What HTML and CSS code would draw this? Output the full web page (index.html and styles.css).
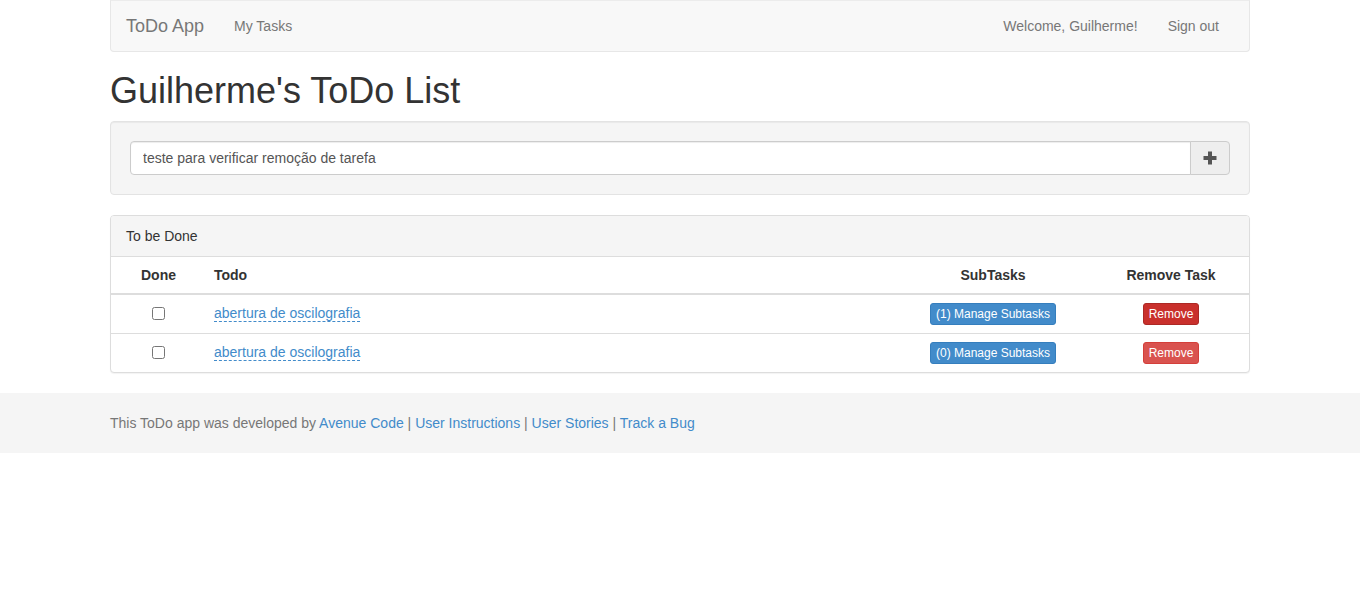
FILE: index.html
```html
<!DOCTYPE html>
<html lang="en">
<head>
<meta charset="utf-8">
<title>ToDo App</title>
<link rel="stylesheet" href="styles.css">
</head>
<body>
<div class="container">
  <nav class="navbar">
    <div class="nav-left">
      <a class="brand" href="#">ToDo App</a>
      <a class="nav-link" href="#">My Tasks</a>
    </div>
    <div class="nav-right">
      <a class="nav-link" href="#">Welcome, Guilherme!</a>
      <a class="nav-link" href="#">Sign out</a>
    </div>
  </nav>

  <h1 class="title">Guilherme's ToDo List</h1>

  <div class="well">
    <div class="input-group">
      <input class="task-input" type="text" value="teste para verificar remoção de tarefa">
      <button class="add-btn" type="button">
        <svg width="14" height="14" viewBox="0 0 14 14"><rect x="5" y="0.5" width="4" height="13" fill="#555"/><rect x="0.5" y="5" width="13" height="4" fill="#555"/></svg>
      </button>
    </div>
  </div>

  <div class="panel">
    <div class="panel-heading">To be Done</div>
    <table class="table">
      <thead>
        <tr>
          <th class="c-done">Done</th>
          <th class="c-todo">Todo</th>
          <th class="c-sub">SubTasks</th>
          <th class="c-rem">Remove Task</th>
        </tr>
      </thead>
      <tbody>
        <tr>
          <td class="c-done"><input type="checkbox" class="chk"></td>
          <td class="c-todo"><a class="editable" href="#">abertura de oscilografia</a></td>
          <td class="c-sub"><button class="btn btn-primary">(1) Manage Subtasks</button></td>
          <td class="c-rem"><button class="btn btn-danger active">Remove</button></td>
        </tr>
        <tr>
          <td class="c-done"><input type="checkbox" class="chk"></td>
          <td class="c-todo"><a class="editable" href="#">abertura de oscilografia</a></td>
          <td class="c-sub"><button class="btn btn-primary">(0) Manage Subtasks</button></td>
          <td class="c-rem"><button class="btn btn-danger">Remove</button></td>
        </tr>
      </tbody>
    </table>
  </div>
</div>

<footer class="footer">
  <div class="container footer-inner">
    This ToDo app was developed by <a href="#">Avenue Code</a> | <a href="#">User Instructions</a> | <a href="#">User Stories</a> | <a href="#">Track a Bug</a>
  </div>
</footer>
</body>
</html>
```

FILE: styles.css
```css
* { box-sizing: border-box; }
html, body { margin: 0; padding: 0; }
body {
  font-family: "Liberation Sans", Arial, Helvetica, sans-serif;
  font-size: 14px;
  line-height: 20px;
  color: #333;
  background: #fff;
}
a { color: #428bca; text-decoration: none; }

.container {
  width: 1170px;
  margin: 0 auto;
  padding: 0 15px;
}

.navbar {
  display: flex;
  justify-content: space-between;
  height: 52px;
  background: #f8f8f8;
  border: 1px solid #e7e7e7;
  border-top: 1px solid #ececec;
  border-radius: 0 0 4px 4px;
  padding: 0 15px;
  margin-bottom: 19px;
}
.nav-left, .nav-right { display: flex; }
.brand {
  color: #777;
  font-size: 18px;
  line-height: 20px;
  padding: 15px 15px 15px 0;
}
.nav-link {
  color: #777;
  padding: 15px;
  line-height: 20px;
}

.title {
  font-size: 36px;
  font-weight: 500;
  line-height: 1.1;
  margin: 0 0 10px;
  color: #333;
}

.well {
  background: #f5f5f5;
  border: 1px solid #e3e3e3;
  border-radius: 4px;
  padding: 19px;
  margin-bottom: 20px;
  box-shadow: inset 0 1px 1px rgba(0,0,0,0.05);
}
.input-group { display: flex; }
.task-input {
  flex: 1;
  height: 34px;
  padding: 6px 12px;
  font-family: inherit;
  font-size: 14px;
  color: #555;
  background: #fff;
  border: 1px solid #ccc;
  border-radius: 4px 0 0 4px;
  box-shadow: inset 0 1px 1px rgba(0,0,0,0.075);
  outline: none;
}
.add-btn {
  width: 40px;
  height: 34px;
  margin-left: -1px;
  background: #eee;
  border: 1px solid #ccc;
  border-radius: 0 4px 4px 0;
  display: flex;
  align-items: center;
  justify-content: center;
  padding: 0;
}

.panel {
  border: 1px solid #ddd;
  border-radius: 4px;
  margin-bottom: 20px;
  background: #fff;
  box-shadow: 0 1px 1px rgba(0,0,0,0.05);
}
.panel-heading {
  background: #f5f5f5;
  border-bottom: 1px solid #ddd;
  padding: 10px 15px;
  border-radius: 3px 3px 0 0;
  color: #333;
}
.table {
  width: 100%;
  border-collapse: collapse;
}
.table th, .table td {
  padding: 8px;
  line-height: 20px;
  vertical-align: top;
}
.table th {
  font-weight: bold;
  border-bottom: 2px solid #ddd;
}
.table td { border-top: 1px solid #ddd; }
.c-done { width: 95px; text-align: center; }
.c-todo { text-align: left; }
.c-sub { width: 200px; text-align: center; }
.c-rem { width: 156px; text-align: center; }

.chk {
  margin: 4px 0 0;
  width: 13px;
  height: 13px;
  vertical-align: top;
}
.editable {
  border-bottom: 1px dashed #428bca;
}
.btn {
  display: inline-block;
  font-family: inherit;
  font-size: 12px;
  line-height: 18px;
  padding: 1px 5px;
  border-radius: 3px;
  border: 1px solid transparent;
  color: #fff;
  vertical-align: middle;
}
.btn-primary { background: #428bca; border-color: #357ebd; }
.btn-danger { background: #d9534f; border-color: #d43f3a; }
.btn-danger.active { background: #c9302c; border-color: #ac2925; }

.footer {
  background: #f5f5f5;
  padding: 20px 0;
}
.footer-inner { color: #777; line-height: 20px; }
.footer-inner a { color: #428bca; }
```
